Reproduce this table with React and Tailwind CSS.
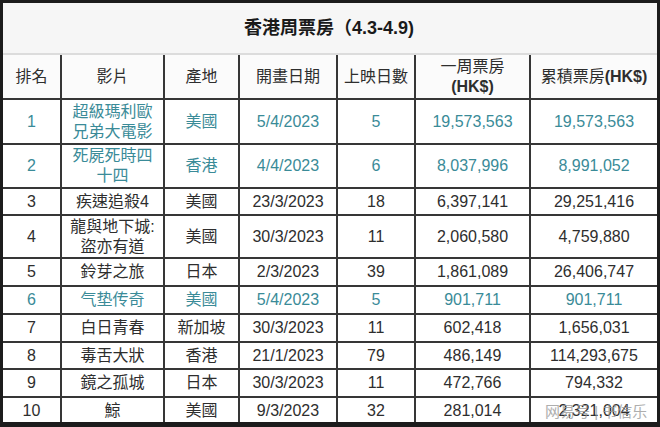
import React from "react";

const rows = [
  { rank: "1", film: ["超級瑪利歐", "兄弟大電影"], origin: "美國", date: "5/4/2023", days: "5", week: "19,573,563", total: "19,573,563", hl: true, h: "h-[45px]" },
  { rank: "2", film: ["死屍死時四", "十四"], origin: "香港", date: "4/4/2023", days: "6", week: "8,037,996", total: "8,991,052", hl: true, h: "h-[44px]" },
  { rank: "3", film: ["疾速追殺4"], origin: "美國", date: "23/3/2023", days: "18", week: "6,397,141", total: "29,251,416", h: "h-[27px]" },
  { rank: "4", film: ["龍與地下城:", "盜亦有道"], origin: "美國", date: "30/3/2023", days: "11", week: "2,060,580", total: "4,759,880", h: "h-[43px]" },
  { rank: "5", film: ["鈴芽之旅"], origin: "日本", date: "2/3/2023", days: "39", week: "1,861,089", total: "26,406,747", h: "h-[28px]" },
  { rank: "6", film: ["气垫传奇"], origin: "美國", date: "5/4/2023", days: "5", week: "901,711", total: "901,711", hl: true, h: "h-[28px]" },
  { rank: "7", film: ["白日青春"], origin: "新加坡", date: "30/3/2023", days: "11", week: "602,418", total: "1,656,031", h: "h-[28px]" },
  { rank: "8", film: ["毒舌大狀"], origin: "香港", date: "21/1/2023", days: "79", week: "486,149", total: "114,293,675", h: "h-[27px]" },
  { rank: "9", film: ["鏡之孤城"], origin: "日本", date: "30/3/2023", days: "11", week: "472,766", total: "794,332", h: "h-[28px]" },
  { rank: "10", film: ["鯨"], origin: "美國", date: "9/3/2023", days: "32", week: "281,014", total: "2,321,004", h: "h-[28px]", mark: true },
];

const cell = "border-2 border-[#363636] text-center align-middle p-0";

export default function App() {
  return (
    <div
      className="w-[660px] h-[427px] overflow-hidden bg-white border-x-[3px] border-t-[3px] border-b-[5px] border-[#1c1c1c] text-[16px] leading-[20px] text-[#2e2e2e]"
      style={{ fontFamily: '"Liberation Sans", "Noto Sans CJK TC", sans-serif' }}
    >
      <div className="h-[52px] bg-[#f6f6f6] flex items-center justify-center border-b-2 border-[#dcdcdc]">
        <span className="text-[18px] font-bold text-[#1a1a1a] ml-[-2px]">香港周票房（4.3-4.9)</span>
      </div>
      <table className="w-[654px] table-fixed border-collapse">
        <colgroup>
          <col className="w-[58px]" />
          <col className="w-[103px]" />
          <col className="w-[75px]" />
          <col className="w-[98px]" />
          <col className="w-[78px]" />
          <col className="w-[115px]" />
          <col className="w-[127px]" />
        </colgroup>
        <thead>
          <tr className="h-[44px] bg-[#fbfbfb]">
            <th className={`${cell} border-t-0 border-l-0 font-normal`}>排名</th>
            <th className={`${cell} border-t-0 font-normal`}>影片</th>
            <th className={`${cell} border-t-0 font-normal`}>產地</th>
            <th className={`${cell} border-t-0 font-normal`}>開畫日期</th>
            <th className={`${cell} border-t-0 font-normal`}>上映日數</th>
            <th className={`${cell} border-t-0 font-normal`}>
              <div>一周票房</div>
              <div className="font-semibold">(HK$)</div>
            </th>
            <th className={`${cell} border-t-0 border-r-0 font-normal`}>
              累積票房<span className="font-semibold">(HK$)</span>
            </th>
          </tr>
        </thead>
        <tbody>
          {rows.map((r) => (
            <tr key={r.rank} className={`${r.h} ${r.hl ? "text-[#3a8b98]" : ""}`}>
              <td className={`${cell} border-l-0`}>{r.rank}</td>
              <td className={cell}>
                {r.film.map((f) => (
                  <div key={f}>{f}</div>
                ))}
              </td>
              <td className={cell}>{r.origin}</td>
              <td className={cell}>{r.date}</td>
              <td className={cell}>{r.days}</td>
              <td className={cell}>{r.week}</td>
              <td className={`${cell} border-r-0 relative`}>
                {r.total}
                {r.mark && (
                  <span className="absolute left-[14px] top-[4px] text-[15px] text-[#9a9a9a] opacity-80 whitespace-nowrap">
                    网易号 | 书信乐
                  </span>
                )}
              </td>
            </tr>
          ))}
        </tbody>
      </table>
    </div>
  );
}
